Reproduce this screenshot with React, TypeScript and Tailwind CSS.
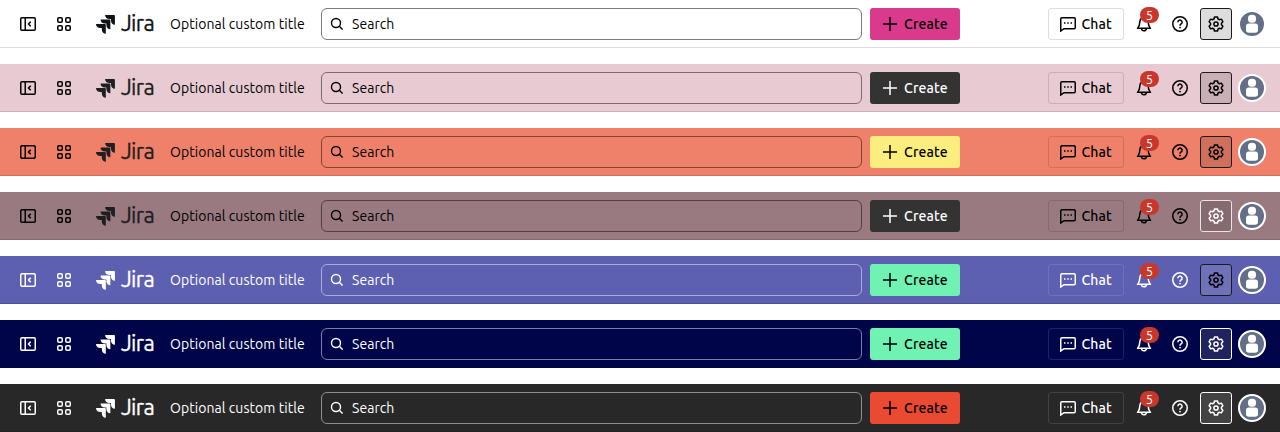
import React from "react";

type Theme = {
  bar: string;
  logo: string;
  field: string;
  create: string;
  chat: string;
  settings: string;
  avatar: string;
};

const RING = "border-2 border-white";

const themes: Theme[] = [
  { bar: "bg-white border-[#dddddd] text-black", logo: "text-[#101214]", field: "border-[#7d7d7d]", create: "bg-[#d93a8b] text-black", chat: "border-[#dddddd]", settings: "bg-[#dddddd] border-[#1c1c1c] text-black", avatar: "" },
  { bar: "bg-[#e8cbd2] border-[#c9b0b6] text-black", logo: "text-[#1e1f21]", field: "border-[#7a6b6f]", create: "bg-[#333333] text-white", chat: "border-[#c9b0b6]", settings: "bg-[#c9b0b6] border-[#1c1c1c] text-black", avatar: RING },
  { bar: "bg-[#ef816b] border-[#cf705d] text-black", logo: "text-[#1e1f21]", field: "border-[#7e4438]", create: "bg-[#fcee7e] text-black", chat: "border-[#cf705d]", settings: "bg-[#cf705d] border-[#1c1c1c] text-black", avatar: RING },
  { bar: "bg-[#997a81] border-[#856a70] text-black", logo: "text-[#1e1f21]", field: "border-[#514144]", create: "bg-[#333333] text-white", chat: "border-[#856a70]", settings: "bg-[#856a70] border-[#e8e4e5] text-white", avatar: RING },
  { bar: "bg-[#5d5fb0] border-[#505298] text-white", logo: "text-white", field: "border-[#aaabd6]", create: "bg-[#6ff2b2] text-black", chat: "border-[#6f71b9]", settings: "bg-[#6f71b9] border-[#1c1c1c] text-black", avatar: RING },
  { bar: "bg-[#000448] border-[#00033e] text-white", logo: "text-white", field: "border-[#7c7ea1]", create: "bg-[#6ff2b2] text-black", chat: "border-[#1f2360]", settings: "bg-[#1f2360] border-white text-white", avatar: RING },
  { bar: "bg-[#282828] border-[#222222] text-white", logo: "text-white", field: "border-[#8f8f8f]", create: "bg-[#eb4a32] text-black", chat: "border-[#424242]", settings: "bg-[#424242] border-white text-white", avatar: RING },
];

function Icon({ children }: { children: React.ReactNode }) {
  return (
    <svg className="size-4 shrink-0" viewBox="0 0 16 16" fill="none" stroke="currentColor" strokeWidth="1.5">
      {children}
    </svg>
  );
}

function SidebarIcon() {
  return (
    <Icon>
      <rect x=".75" y="1.75" width="14.5" height="12.5" rx="1.25" />
      <path d="M5.25 2v12M10.75 5.75 8.5 8l2.25 2.25" />
    </Icon>
  );
}

function AppsIcon() {
  return (
    <Icon>
      <rect x="1.75" y="1.75" width="4.5" height="4.5" rx="1.25" />
      <rect x="9.75" y="1.75" width="4.5" height="4.5" rx="1.25" />
      <rect x="1.75" y="9.75" width="4.5" height="4.5" rx="1.25" />
      <rect x="9.75" y="9.75" width="4.5" height="4.5" rx="1.25" />
    </Icon>
  );
}

function ChatIcon() {
  return (
    <Icon>
      <path d="M.75 15V3c0-.7.55-1.25 1.25-1.25h12c.7 0 1.25.55 1.25 1.25v8.5c0 .7-.55 1.25-1.25 1.25H4z" />
      <path d="M4 7h1.5M7.25 7h1.5M10.5 7H12" strokeWidth="1.6" />
    </Icon>
  );
}

function BellIcon() {
  return (
    <Icon>
      <path d="M1.8 12.25h12.4l-1.5-3.1-.6-3.8a4.15 4.15 0 0 0-8.2 0l-.6 3.8z" />
      <path d="M5.5 12.5a2.5 2.25 0 0 0 5 0" />
    </Icon>
  );
}

function HelpIcon() {
  return (
    <Icon>
      <circle cx="8" cy="8" r="7.25" />
      <path d="M5.9 6.2a2.1 2.1 0 1 1 3.3 1.75C8.4 8.5 8 8.75 8 9.75" />
      <circle cx="8" cy="11.6" r=".9" fill="currentColor" stroke="none" />
    </Icon>
  );
}

function SettingsIcon() {
  return (
    <Icon>
      <path
        strokeLinejoin="round"
        d="M6.5.95h3l.5 2 1.4.8 2-.6 1.5 2.6L13.45 7.2v1.6l1.45 1.45-1.5 2.6-2-.6-1.4.8-.5 2h-3l-.5-2-1.4-.8-2 .6-1.5-2.6L2.55 8.8V7.2L1.1 5.75l1.5-2.6 2 .6 1.4-.8z"
      />
      <circle cx="8" cy="8" r="2.1" />
    </Icon>
  );
}

function JiraMark() {
  return (
    <svg className="h-5 w-5 shrink-0" viewBox="0 0 20.2 20.2" fill="currentColor">
      <path d="M5.9 14.2H4.4C1.9 14.2 0 12.5 0 10.1h9.1c.5 0 .8.3.8.8V20c-2.4 0-4-1.8-4-4.3z" />
      <path d="M10.5 9.6H9C6.5 9.6 4.6 7.9 4.6 5.5h9.1c.5 0 .8.3.8.8v9.1c-2.4 0-4-1.8-4-4.3z" />
      <path d="M15.1 5h-1.5C11.1 5 9.2 3.3 9.2.9h9.1c.5 0 .8.3.8.8v9.1c-2.4 0-4-1.8-4-4.3z" />
    </svg>
  );
}

function TopBar({ theme }: { theme: Theme }) {
  return (
    <header className={`flex h-12 shrink-0 items-center border-b px-3 ${theme.bar}`}>
      <div className="flex w-[309px] shrink-0 items-center">
        <button className="flex size-8 items-center justify-center"><SidebarIcon /></button>
        <button className="ml-1 flex size-8 items-center justify-center"><AppsIcon /></button>
        <div className={`ml-4 flex w-[58px] items-center ${theme.logo}`}>
          <JiraMark />
          <span className="ml-[5px] pb-px text-[22px] leading-6 tracking-[-0.7px] [-webkit-text-stroke:0.3px_currentColor]">Jira</span>
        </div>
        <span className="ml-4 whitespace-nowrap text-[14px] leading-5 tracking-[0.06px]">Optional custom title</span>
      </div>
      <div className={`flex h-8 w-[541px] shrink-0 items-center rounded-[6px] border pl-[7px] ${theme.field}`}>
        <svg className="size-4" viewBox="0 0 16 16" fill="none" stroke="currentColor" strokeWidth="1.4">
          <circle cx="7" cy="7" r="4.5" />
          <path d="m10.3 10.3 3.3 3.3" />
        </svg>
        <span className="ml-[7px] text-[14px] leading-5 tracking-[0.06px]">Search</span>
      </div>
      <button className={`ml-2 flex h-8 w-[90px] shrink-0 items-center rounded-[3px] pl-3 ${theme.create}`}>
        <svg className="size-4 shrink-0" viewBox="0 0 16 16" fill="none" stroke="currentColor" strokeWidth="1.5">
          <path d="M8 1v14M1 8h14" />
        </svg>
        <span className="ml-[6px] text-[14px] font-medium leading-5 tracking-[0.15px]">Create</span>
      </button>
      <div className="ml-auto flex items-center gap-1">
        <button className={`flex h-8 w-[76px] items-center rounded-[3px] border pl-[11px] ${theme.chat}`}>
          <ChatIcon />
          <span className="ml-[5.5px] text-[14px] font-medium leading-5 tracking-[0.1px]">Chat</span>
        </button>
        <button className="relative flex size-8 items-center justify-center">
          <BellIcon />
          <span className="absolute -top-px left-3 flex h-4 w-[19px] items-center justify-center rounded-full bg-[#c9372c] text-[13px] leading-4 text-white">5</span>
        </button>
        <button className="flex size-8 items-center justify-center"><HelpIcon /></button>
        <button className={`flex size-8 items-center justify-center rounded-[3px] border ${theme.settings}`}><SettingsIcon /></button>
        <button className="flex size-8 items-center justify-center">
          <span className={`box-content size-6 shrink-0 overflow-hidden rounded-full bg-[#626f86] ${theme.avatar}`}>
            <svg className="size-6" viewBox="0 0 24 24" fill="white">
              <rect x="8" y="2.8" width="8" height="8" rx="3.5" />
              <rect x="6" y="11.6" width="12" height="9.2" rx="2.8" />
            </svg>
          </span>
        </button>
      </div>
    </header>
  );
}

export default function App() {
  return (
    <main className="flex h-[432px] w-[1280px] flex-col gap-4 overflow-hidden bg-white font-['Ubuntu','Noto_Sans',sans-serif]">
      {themes.map((theme, index) => (
        <TopBar key={index} theme={theme} />
      ))}
    </main>
  );
}
